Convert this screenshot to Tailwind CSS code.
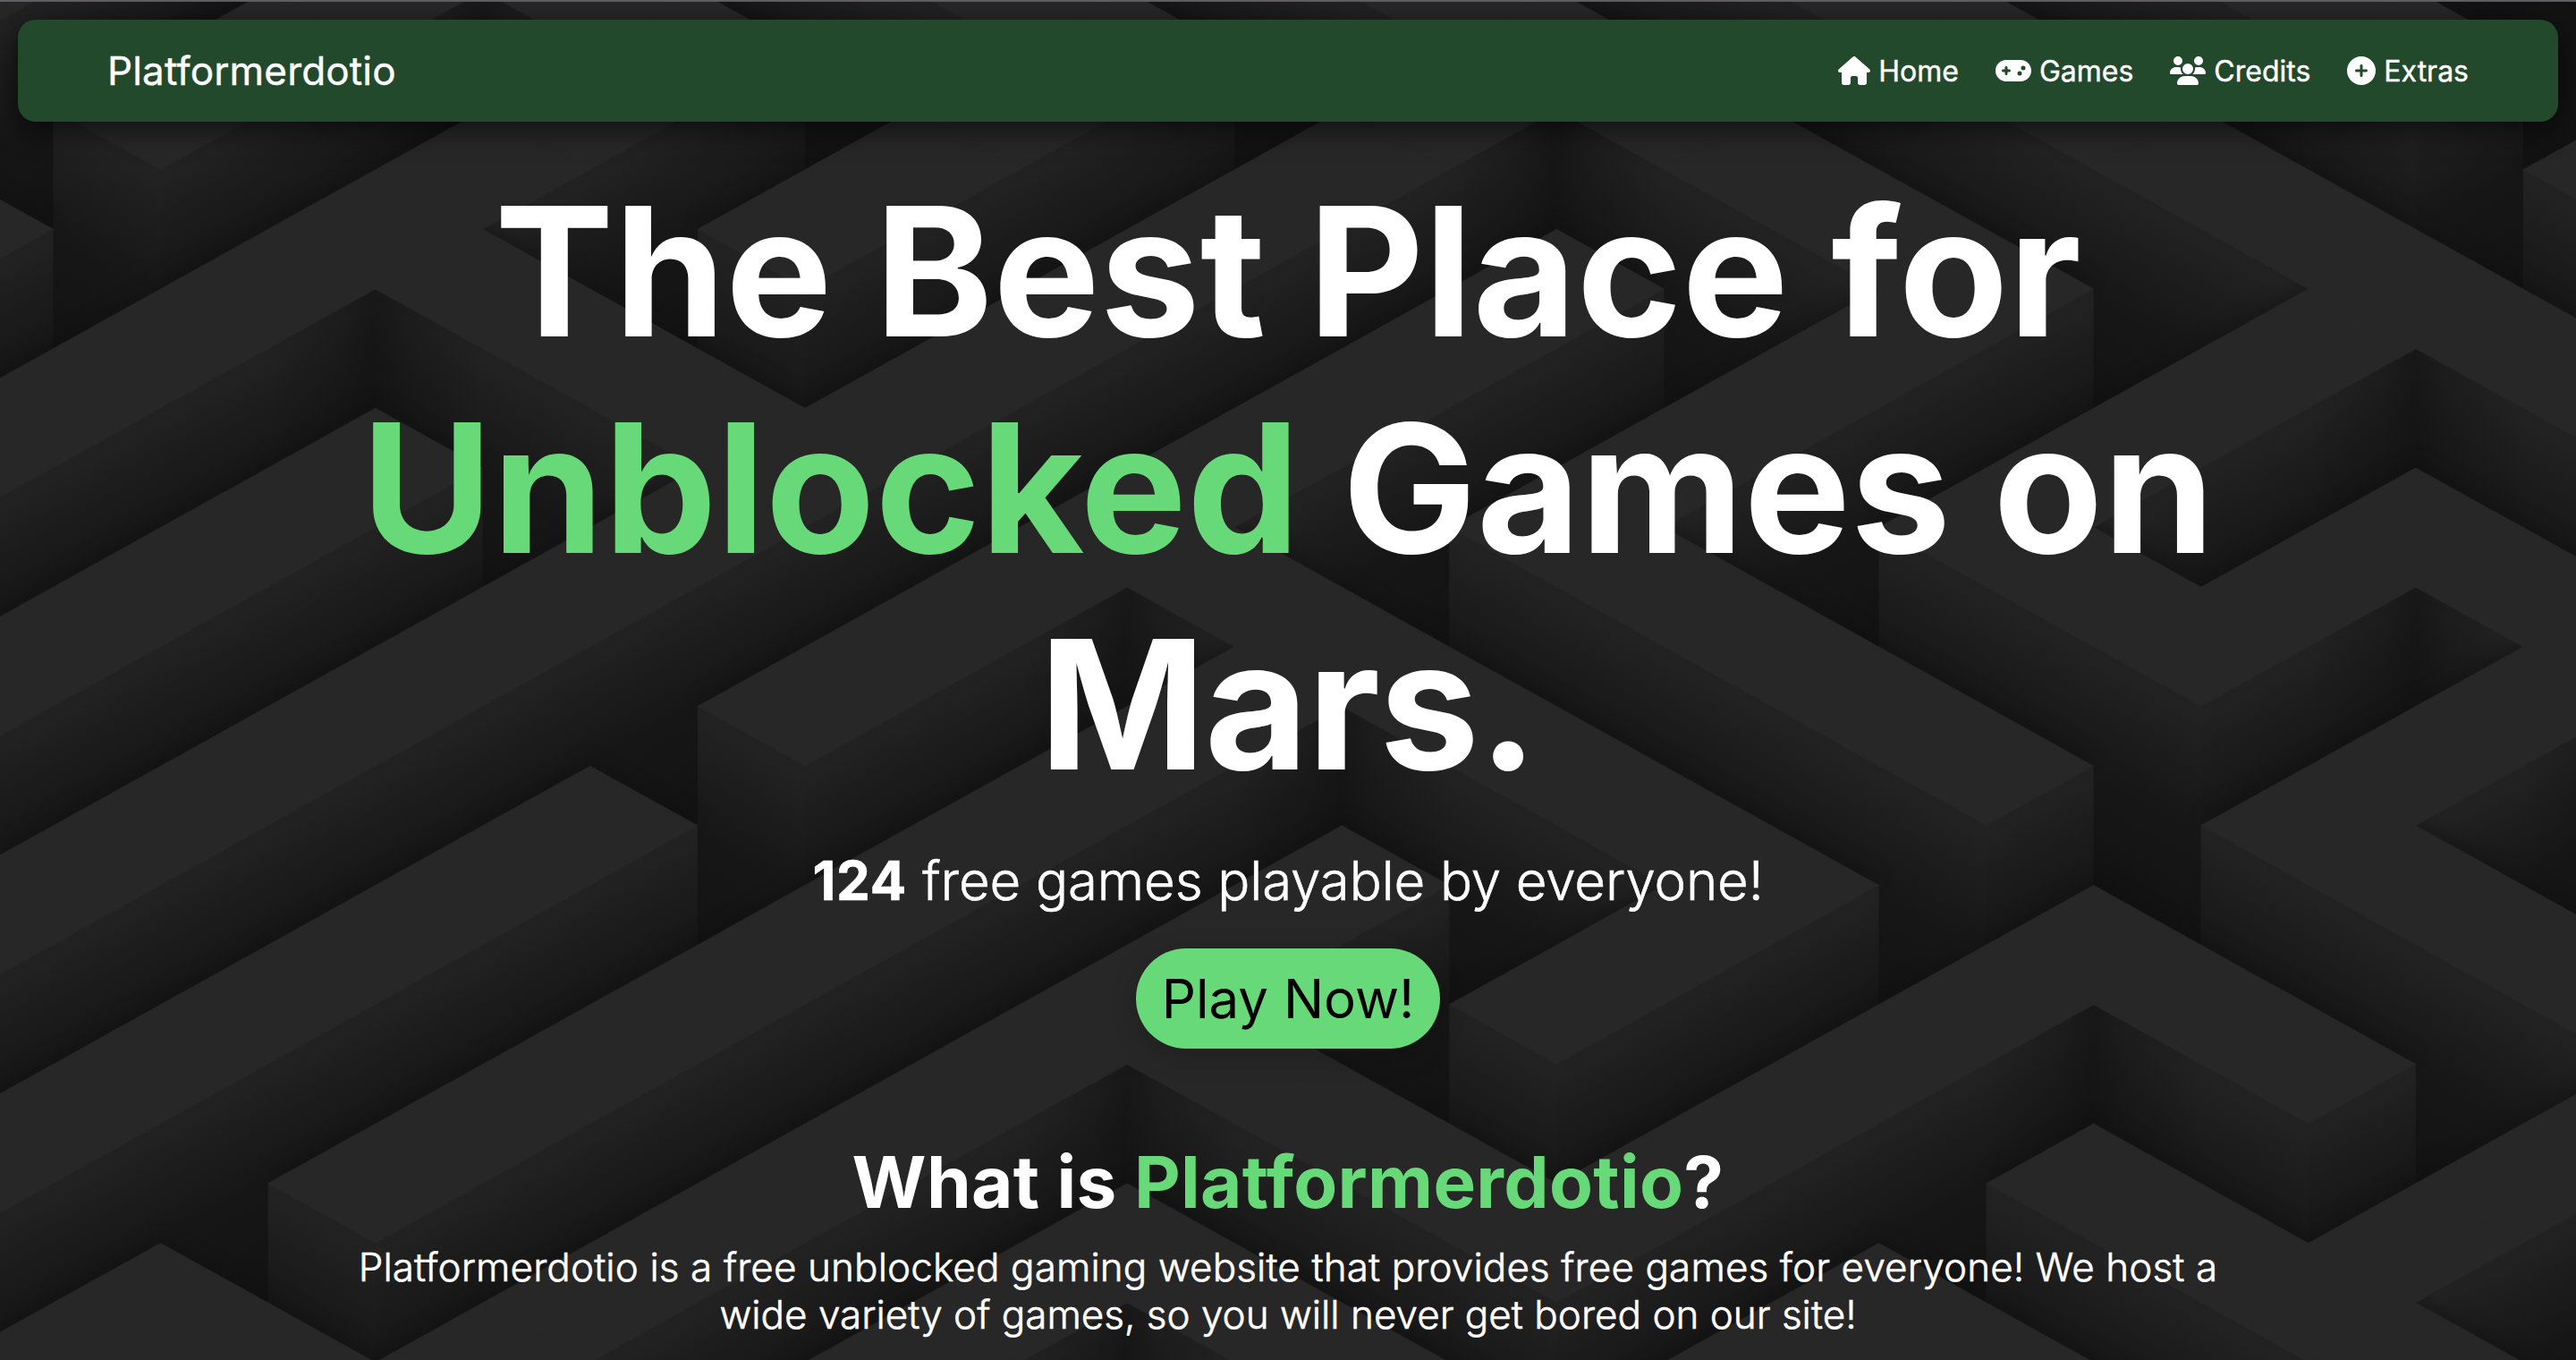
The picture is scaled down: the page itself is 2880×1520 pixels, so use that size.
<!DOCTYPE html>
<html lang="en">
<head>
<meta charset="utf-8">
<title>Platformerdotio</title>
<script src="https://cdn.jsdelivr.net/npm/@tailwindcss/browser@4"></script>
</head>
<body class="relative h-[1520px] w-[2880px] overflow-hidden bg-[#131313] font-['Inter',sans-serif] text-white">
<!-- Isometric maze backdrop -->
<svg class="absolute inset-0 h-full w-full" viewBox="0 0 2880 1520" aria-hidden="true">
  <defs>
    <linearGradient id="se" gradientUnits="userSpaceOnUse" x1="0" y1="0" x2="4" y2="0">
      <stop offset="0" stop-color="#232323"/><stop offset=".2" stop-color="#1d1d1d"/><stop offset=".5" stop-color="#161616"/><stop offset="1" stop-color="#121212"/>
    </linearGradient>
    <linearGradient id="sw" gradientUnits="userSpaceOnUse" x1="0" y1="0" x2="0" y2="4">
      <stop offset="0" stop-color="#232323"/><stop offset=".2" stop-color="#1e1e1e"/><stop offset=".5" stop-color="#171717"/><stop offset="1" stop-color="#121212"/>
    </linearGradient>
    <linearGradient id="dimLeft" gradientUnits="userSpaceOnUse" x1="0" y1="0" x2="-1" y2="1">
      <stop offset="0" stop-color="#111111" stop-opacity=".6"/><stop offset=".3" stop-color="#111111" stop-opacity=".3"/><stop offset="1" stop-color="#111111" stop-opacity="0"/>
    </linearGradient>
    <linearGradient id="dimRight" gradientUnits="userSpaceOnUse" x1="0" y1="0" x2="1" y2="-1">
      <stop offset="0" stop-color="#111111" stop-opacity=".6"/><stop offset=".3" stop-color="#111111" stop-opacity=".3"/><stop offset="1" stop-color="#111111" stop-opacity="0"/>
    </linearGradient>
    <filter id="contact" filterUnits="userSpaceOnUse" x="0" y="0" width="2880" height="1520" color-interpolation-filters="sRGB">
      <feDropShadow dx="0" dy="-10" stdDeviation="8" flood-color="#101010" flood-opacity=".4"/>
    </filter>
  </defs>
  <g id="walls" transform="matrix(60.03 33.325 -60.03 33.325 59.5 -10.25)"></g>
  <g filter="url(#contact)"><g id="tops" transform="matrix(60.03 33.325 -60.03 33.325 59.5 -10.25)"></g></g>
</svg>
<script>
  // Maze bars on the isometric grid: [u0, u1, v0, v1]; u runs down-right, v runs down-left.
  const bars = [
    [-2,0,-6,12],[2,4,-6,2],[-12,8,-6,-4],[6,8,-6,40],[8,14,0,2],[2,4,4,12],
    [14,16,-14,40],[10,12,-10,-2],[-12,12,-10,-8],[10,12,4,40],
    [-12,24,-14,-12],[22,24,-14,-4],[22,32,-6,-4],
    [-12,60,-18,-16],[26,28,-18,-8],[26,32,-10,-8],[30,32,-14,-8],[30,60,-14,-12],[34,36,-14,-6],[34,60,-8,-6],
    [-12,24,-22,-20],[26,40,-24,-20],
    [34,40,-4,-2],[34,36,-4,8],[26,36,6,8],[26,28,2,24],
    [38,60,0,2],[42,44,-12,2],[38,60,4,6],[38,40,4,20],
    [18,20,-10,6],[18,32,-2,0],[30,32,-2,4],[22,24,-2,18],
    [18,20,8,40],[22,28,20,30],[30,32,10,30],[30,60,10,12]
  ];
  const cells = new Set();
  for (const [a, b, c, d] of bars)
    for (let u = a; u < b; u += 2) for (let v = c; v < d; v += 2) cells.add(u + ',' + v);
  const has = (u, v) => cells.has(u + ',' + v);
  const sorted = [...cells].map(k => k.split(',').map(Number)).sort((p, q) => p[0] + p[1] - q[0] - q[1]);
  let walls = '', tops = '';
  for (const [u, v] of sorted) {
    if (!has(u + 2, v)) {
      const at = `transform="translate(${u + 2} ${v})"`, d = 'd="M0 0V2.01L4 6.01V4Z"';
      walls += `<path ${at} fill="url(#se)" ${d}/>`;
      if (has(u + 2, v - 2)) walls += `<path ${at} fill="url(#dimLeft)" ${d}/>`;
    }
    if (!has(u, v + 2)) {
      const at = `transform="translate(${u} ${v + 2})"`, d = 'd="M0 0H2.01L6.01 4H4Z"';
      walls += `<path ${at} fill="url(#sw)" ${d}/>`;
      if (has(u - 2, v + 2)) walls += `<path ${at} fill="url(#dimRight)" ${d}/>`;
    }
    tops += `M${u} ${v}h2v2h-2z`;
  }
  document.getElementById('walls').innerHTML = walls;
  document.getElementById('tops').innerHTML = `<path d="${tops}" fill="#272727" stroke="#272727" stroke-width=".015"/>`;
</script>

<div class="relative flex h-full flex-col border-t-2 border-[#5f6064] px-5 pt-5">
  <nav class="flex h-[114px] items-center justify-between rounded-[20px] bg-[#23492c] px-[100px] shadow-[0_8px_32px_rgba(0,0,0,0.6)] [-webkit-text-stroke:0.4px_white]">
    <a class="text-[44px] leading-none tracking-[0.17px]">Platformerdotio</a>
    <div class="flex items-center gap-[41px] text-[32px] leading-none">
      <a class="flex items-center gap-[9px]"><svg class="h-8 w-9 fill-white" viewBox="0 0 576 512"><path d="M575.8 255.5c0 18-15 32.1-32 32.1h-32l.7 160.2c0 2.7-.2 5.4-.5 8.1V472c0 22.1-17.9 40-40 40H456c-1.1 0-2.2 0-3.3-.1c-1.4 .1-2.8 .1-4.2 .1H416 392c-22.1 0-40-17.9-40-40V448 384c0-17.7-14.3-32-32-32H256c-17.7 0-32 14.3-32 32v64 24c0 22.1-17.9 40-40 40H160 128.1c-1.5 0-3-.1-4.5-.2c-1.2 .1-2.4 .2-3.6 .2H104c-22.1 0-40-17.9-40-40V360c0-.9 0-1.9 .1-2.8V287.6H32c-18 0-32-14-32-32.1c0-9 3-17 10-24L266.4 8c7-7 15-8 22-8s15 2 21 7L564.8 231.5c8 7 12 15 11 24z"/></svg><span class="pt-px">Home</span></a>
      <a class="flex items-center gap-[9px]"><svg class="h-8 w-10 fill-white" viewBox="0 0 640 512"><path fill-rule="evenodd" d="M192 64C86 64 0 150 0 256S86 448 192 448H448c106 0 192-86 192-192s-86-192-192-192H192zM496 168a40 40 0 1 1 0 80 40 40 0 1 1 0-80zM392 304a40 40 0 1 1 80 0 40 40 0 1 1-80 0zM168 200c0-13.3 10.7-24 24-24s24 10.7 24 24v32h32c13.3 0 24 10.7 24 24s-10.7 24-24 24H216v32c0 13.3-10.7 24-24 24s-24-10.7-24-24V280H136c-13.3 0-24-10.7-24-24s10.7-24 24-24h32V200z"/></svg><span class="pt-px">Games</span></a>
      <a class="flex items-center gap-[9px]"><svg class="h-8 w-10 fill-white" viewBox="0 0 640 512"><path d="M144 0a80 80 0 1 1 0 160A80 80 0 1 1 144 0zM512 0a80 80 0 1 1 0 160A80 80 0 1 1 512 0zM0 298.7C0 239.8 47.8 192 106.7 192h42.7c15.9 0 31 3.5 44.6 9.7c-1.3 7.2-1.9 14.7-1.9 22.3c0 38.2 16.8 72.5 43.3 96c-.2 0-.4 0-.7 0H21.3C9.6 320 0 310.4 0 298.7zM405.3 320c-.2 0-.4 0-.7 0c26.6-23.5 43.3-57.8 43.3-96c0-7.6-.7-15-1.9-22.3c13.6-6.3 28.7-9.7 44.6-9.7h42.7C592.2 192 640 239.8 640 298.7c0 11.8-9.6 21.3-21.3 21.3H405.3zM224 224a96 96 0 1 1 192 0 96 96 0 1 1 -192 0zM128 485.3C128 411.7 187.7 352 261.3 352H378.7C452.3 352 512 411.7 512 485.3c0 14.7-11.9 26.7-26.7 26.7H154.7c-14.7 0-26.7-11.9-26.7-26.7z"/></svg><span class="pt-px">Credits</span></a>
      <a class="flex items-center gap-[9px]"><svg class="size-8 fill-white" viewBox="0 0 512 512"><path fill-rule="evenodd" d="M256 512A256 256 0 1 0 256 0a256 256 0 1 0 0 512zM232 344V280H168c-13.3 0-24-10.7-24-24s10.7-24 24-24h64V168c0-13.3 10.7-24 24-24s24 10.7 24 24v64h64c13.3 0 24 10.7 24 24s-10.7 24-24 24H280v64c0 13.3-10.7 24-24 24s-24-10.7-24-24z"/></svg><span class="pt-px">Extras</span></a>
    </div>
  </nav>
  <main class="flex flex-col items-center text-center">
    <h1 class="mt-[46px] text-[200px] leading-[242px] font-bold tracking-[0.1px] whitespace-nowrap">The Best Place for<br><span class="text-[#68d978]">Unblocked</span> Games on<br><span class="tracking-[-1.2px]">Mars.</span></h1>
    <p class="mt-10 text-[60px] leading-[73px] font-light tracking-[-0.12px] whitespace-nowrap [-webkit-text-stroke:0.6px_white]"><b class="font-bold tracking-[0.8px]">124</b> free games playable by everyone!</p>
    <a class="mt-[39px] flex h-[112px] w-[340px] items-center justify-center rounded-full bg-[#68d978] text-[60px] leading-[73px] whitespace-nowrap text-black shadow-[0_8px_32px_rgba(0,0,0,0.2)]">Play Now!</a>
    <h2 class="mt-[100px] text-[80px] leading-[97px] font-bold tracking-[0.3px] whitespace-nowrap">What is <span class="text-[#68d978]">Platformerdotio</span>?</h2>
    <p class="mt-[21px] text-[44px] leading-[53px] font-light whitespace-nowrap [-webkit-text-stroke:0.6px_white]"><span class="tracking-[0.11px]">Platformerdotio is a free unblocked gaming website that provides free games for everyone! We host a</span><br>wide variety of games, so you will never get bored on our site!</p>
  </main>
</div>
</body>
</html>
